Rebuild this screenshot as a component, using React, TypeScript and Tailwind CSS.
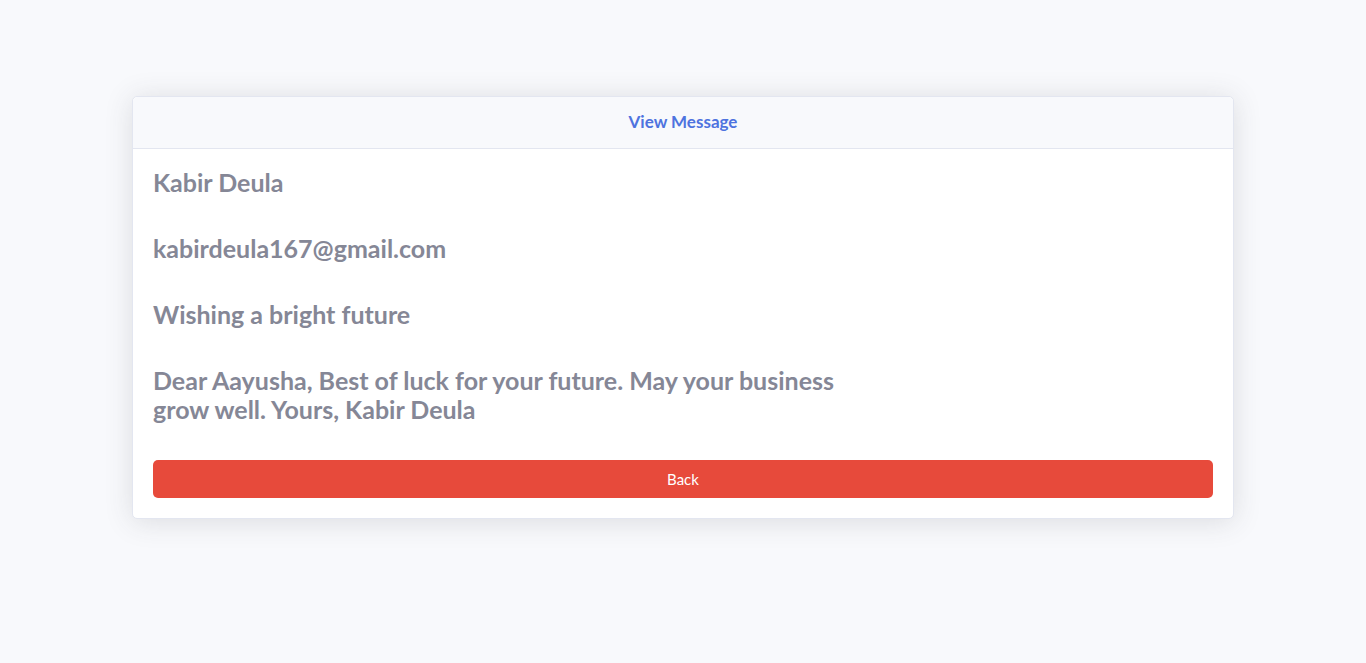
import React from "react";

export default function App() {
  const font = { fontFamily: "Lato, 'Noto Sans', sans-serif" };
  return (
    <div className="min-h-[663px] w-full bg-[#f8f9fc] pt-[96px]" style={font}>
      <div className="mx-auto w-[1102px] rounded-[5px] border border-[#e3e6f0] bg-white shadow-[0_2.4px_28px_0_rgba(58,59,69,0.15)]">
        <div className="flex h-[52px] items-center justify-center rounded-t-[5px] border-b border-[#e3e6f0] bg-[#f8f9fc] pb-[2px]">
          <h6 className="m-0 text-[17px] font-bold text-[#4e73df]">View Message</h6>
        </div>
        <div className="px-5 pt-[19px] pb-5">
          <div className="flex flex-col gap-[37px] text-[25px] font-bold leading-[29px] text-[#858796]">
            <h4>Kabir Deula</h4>
            <h4>kabirdeula167@gmail.com</h4>
            <h4>Wishing a bright future</h4>
            <h4 className="max-w-[740px]">
              Dear Aayusha, Best of luck for your future. May your business grow well. Yours, Kabir Deula
            </h4>
          </div>
          <button className="mt-[36px] flex h-[38px] w-full items-center justify-center rounded-[5px] bg-[#e74a3b] text-[15px] text-white">
            Back
          </button>
        </div>
      </div>
    </div>
  );
}
